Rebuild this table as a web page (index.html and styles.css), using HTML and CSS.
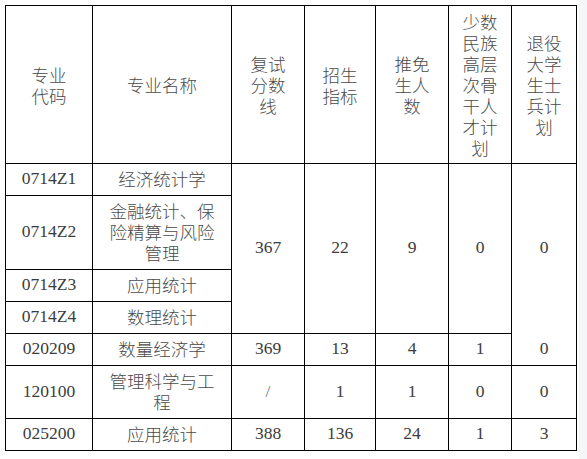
FILE: index.html
```html
<!DOCTYPE html>
<html lang="zh">
<head>
<meta charset="utf-8">
<title>复试分数线</title>
<link rel="stylesheet" href="styles.css">
</head>
<body>
<div class="sheet">
<table class="grid">
  <colgroup>
    <col class="c1"><col class="c2"><col class="c3"><col class="c4"><col class="c5"><col class="c6"><col class="c7">
  </colgroup>
  <thead>
    <tr class="head">
      <th>专业<br>代码</th>
      <th>专业名称</th>
      <th>复试<br>分数<br>线</th>
      <th>招生<br>指标</th>
      <th>推免<br>生人<br>数</th>
      <th>少数<br>民族<br>高层<br>次骨<br>干人<br>才计<br>划</th>
      <th>退役<br>大学<br>生士<br>兵计<br>划</th>
    </tr>
  </thead>
  <tbody>
    <tr class="r32">
      <td class="num">0714Z1</td>
      <td class="name">经济统计学</td>
      <td class="num" rowspan="4">367</td>
      <td class="num" rowspan="4">22</td>
      <td class="num" rowspan="4">9</td>
      <td class="num" rowspan="4">0</td>
      <td class="num open-bottom" rowspan="4">0</td>
    </tr>
    <tr class="r74">
      <td class="num">0714Z2</td>
      <td class="name">金融统计、保险精算与风险管理</td>
    </tr>
    <tr class="r32">
      <td class="num">0714Z3</td>
      <td class="name">应用统计</td>
    </tr>
    <tr class="r32">
      <td class="num">0714Z4</td>
      <td class="name">数理统计</td>
    </tr>
    <tr class="r32">
      <td class="num">020209</td>
      <td class="name">数量经济学</td>
      <td class="num">369</td>
      <td class="num">13</td>
      <td class="num">4</td>
      <td class="num">1</td>
      <td class="num open-top">0</td>
    </tr>
    <tr class="r53">
      <td class="num">120100</td>
      <td class="name">管理科学与工程</td>
      <td class="num slash">/</td>
      <td class="num">1</td>
      <td class="num">1</td>
      <td class="num">0</td>
      <td class="num">0</td>
    </tr>
    <tr class="r32">
      <td class="num">025200</td>
      <td class="name">应用统计</td>
      <td class="num">388</td>
      <td class="num">136</td>
      <td class="num">24</td>
      <td class="num">1</td>
      <td class="num">3</td>
    </tr>
  </tbody>
</table>
</div>
</body>
</html>
```

FILE: styles.css
```css
html, body {
  margin: 0;
  padding: 0;
}
body {
  background: #f4f6fa;
  width: 587px;
  height: 459px;
  overflow: hidden;
}
.sheet {
  width: 579px;
  height: 459px;
  background: #ffffff;
  padding: 5px 0 0 5px;
  box-sizing: border-box;
}
.grid {
  border-collapse: collapse;
  table-layout: fixed;
  width: 572px;
  color: #3c3c3c;
  font-family: "Liberation Serif", "Noto Sans CJK SC", serif;
  font-size: 17.5px;
  line-height: 21px;
}
.c1 { width: 87px; }
.c2 { width: 139px; }
.c3 { width: 73px; }
.c4 { width: 71px; }
.c5 { width: 73px; }
.c6 { width: 63px; }
.c7 { width: 65px; }
.grid th,
.grid td {
  border: 1px solid #000;
  padding: 0;
  text-align: center;
  vertical-align: middle;
  font-weight: normal;
}
.grid th {
  font-family: "Noto Sans CJK SC", sans-serif;
  font-weight: 300;
  color: #4a4a4a;
}
.head { height: 158px; }
.r32 { height: 32px; }
.r74 { height: 74px; }
.r53 { height: 53px; }
.name {
  font-family: "Noto Sans CJK SC", sans-serif;
  font-weight: 300 !important;
  color: #4a4a4a;
  padding: 0 15px 2px !important;
}
.num {
  font-family: "Liberation Serif", serif;
  padding-bottom: 2px !important;
}
.slash {
  color: #777;
}
.grid td.open-bottom { border-bottom: hidden; }
.grid td.open-top { border-top: hidden; }
```
